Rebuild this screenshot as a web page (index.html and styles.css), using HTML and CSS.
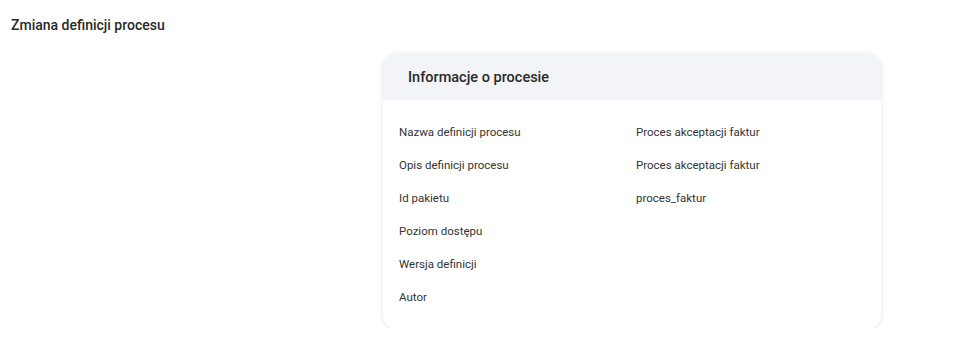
FILE: index.html
```html
<!DOCTYPE html>
<html>

<head>
  <title>Zmiana definicji procesu</title>
  <link rel="stylesheet" href="styles.css">
</head>

<body>
  <h1 class="page-title">Zmiana definicji procesu</h1>

  <div class="content">
    <div class="card">
      <div class="card-header">
        <h2>Informacje o procesie</h2>
      </div>
      <div class="card-body">
        <div class="info-row">
          <span class="label">Nazwa definicji procesu</span>
          <span class="value">Proces akceptacji faktur</span>
        </div>
        <div class="info-row">
          <span class="label">Opis definicji procesu</span>
          <span class="value">Proces akceptacji faktur</span>
        </div>
        <div class="info-row">
          <span class="label">Id pakietu</span>
          <span class="value">proces_faktur</span>
        </div>
        <div class="info-row">
          <span class="label">Poziom dostępu</span>
          <span class="value"></span>
        </div>
        <div class="info-row">
          <span class="label">Wersja definicji</span>
          <span class="value"></span>
        </div>
        <div class="info-row">
          <span class="label">Autor</span>
          <span class="value"></span>
        </div>
      </div>
    </div>
  </div>
</body>

</html>
```

FILE: styles.css
```css
body {
  font-family: Roboto, Arial, sans-serif;
  margin: 0;
  padding: 0;
  background-color: #fff;
  color: #333;
}

.page-title {
  font-size: 14px;
  font-weight: 500;
  color: #2a2a2a;
  margin: 0;
  padding: 15px 11px 0;
  line-height: 20px;
}

/* card area */
.content {
  padding: 19px 0 0 383px;
}

.card {
  width: 498px;
  background-color: #fff;
  border-radius: 12px;
  box-shadow: 0 1px 6px rgba(0, 0, 0, 0.1);
  overflow: hidden;
}

.card-header {
  background-color: #f3f4f7;
  height: 46px;
  display: flex;
  align-items: center;
  padding-left: 25px;
}

.card-header h2 {
  font-size: 14.5px;
  font-weight: 500;
  color: #2a2a2a;
  margin: 0;
}

.card-body {
  padding: 15px 16px 15px;
}

.info-row {
  display: grid;
  grid-template-columns: 237px 1fr;
  height: 33px;
  align-items: center;
  font-size: 11.5px;
  color: #333;
}
```
